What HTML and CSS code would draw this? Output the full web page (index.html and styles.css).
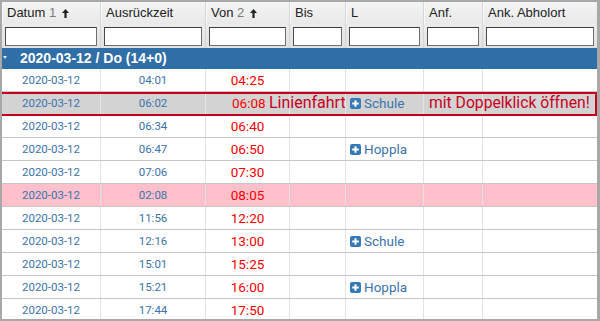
FILE: index.html
```html
<!DOCTYPE html>
<html>
<head>
<meta charset="utf-8">
<link rel="stylesheet" href="styles.css">
</head>
<body>
<div class="frame">
  <div class="cols head">
    <div class="hc">Datum <span class="num">1</span> <svg class="arr" width="7" height="9" viewBox="0 0 7 9"><path d="M3.5 0 L7 4 L4.6 4 L4.6 9 L2.4 9 L2.4 4 L0 4 Z" fill="#222"/></svg></div>
    <div class="hc">Ausrückzeit</div>
    <div class="hc">Von <span class="num">2</span> <svg class="arr" width="7" height="9" viewBox="0 0 7 9"><path d="M3.5 0 L7 4 L4.6 4 L4.6 9 L2.4 9 L2.4 4 L0 4 Z" fill="#222"/></svg></div>
    <div class="hc">Bis</div>
    <div class="hc">L</div>
    <div class="hc">Anf.</div>
    <div class="hc last">Ank. Abholort</div>
  </div>
  <div class="cols filters">
    <div class="fc"><input type="text"></div>
    <div class="fc"><input type="text"></div>
    <div class="fc"><input type="text"></div>
    <div class="fc"><input type="text"></div>
    <div class="fc"><input type="text"></div>
    <div class="fc"><input type="text"></div>
    <div class="fc last"><input type="text"></div>
  </div>
  <div class="group"><span class="tri"></span>2020-03-12 / Do (14+0)</div>

  <div class="cols row">
    <div class="c date">2020-03-12</div><div class="c time">04:01</div><div class="c von">04:25</div><div class="c"></div><div class="c"></div><div class="c"></div><div class="c last"></div>
  </div>
  <div class="cols row sel">
    <div class="c date">2020-03-12</div><div class="c time">06:02</div><div class="c von left">06:08 <span class="note">Linienfahrt</span></div><div class="c"></div><div class="c tag"><svg class="plus" width="11" height="11" viewBox="0 0 11 11"><rect width="11" height="11" rx="2" fill="#337ab7"/><path d="M5.5 2.2V8.8M2.2 5.5H8.8" stroke="#fff" stroke-width="2"/></svg>Schule</div><div class="c"><span class="note hint">mit Doppelklick öffnen!</span></div><div class="c last"></div>
  </div>
  <div class="cols row">
    <div class="c date">2020-03-12</div><div class="c time">06:34</div><div class="c von">06:40</div><div class="c"></div><div class="c"></div><div class="c"></div><div class="c last"></div>
  </div>
  <div class="cols row">
    <div class="c date">2020-03-12</div><div class="c time">06:47</div><div class="c von">06:50</div><div class="c"></div><div class="c tag"><svg class="plus" width="11" height="11" viewBox="0 0 11 11"><rect width="11" height="11" rx="2" fill="#337ab7"/><path d="M5.5 2.2V8.8M2.2 5.5H8.8" stroke="#fff" stroke-width="2"/></svg>Hoppla</div><div class="c"></div><div class="c last"></div>
  </div>
  <div class="cols row">
    <div class="c date">2020-03-12</div><div class="c time">07:06</div><div class="c von">07:30</div><div class="c"></div><div class="c"></div><div class="c"></div><div class="c last"></div>
  </div>
  <div class="cols row pink">
    <div class="c date">2020-03-12</div><div class="c time">02:08</div><div class="c von">08:05</div><div class="c"></div><div class="c"></div><div class="c"></div><div class="c last"></div>
  </div>
  <div class="cols row">
    <div class="c date">2020-03-12</div><div class="c time">11:56</div><div class="c von">12:20</div><div class="c"></div><div class="c"></div><div class="c"></div><div class="c last"></div>
  </div>
  <div class="cols row">
    <div class="c date">2020-03-12</div><div class="c time">12:16</div><div class="c von">13:00</div><div class="c"></div><div class="c tag"><svg class="plus" width="11" height="11" viewBox="0 0 11 11"><rect width="11" height="11" rx="2" fill="#337ab7"/><path d="M5.5 2.2V8.8M2.2 5.5H8.8" stroke="#fff" stroke-width="2"/></svg>Schule</div><div class="c"></div><div class="c last"></div>
  </div>
  <div class="cols row">
    <div class="c date">2020-03-12</div><div class="c time">15:01</div><div class="c von">15:25</div><div class="c"></div><div class="c"></div><div class="c"></div><div class="c last"></div>
  </div>
  <div class="cols row">
    <div class="c date">2020-03-12</div><div class="c time">15:21</div><div class="c von">16:00</div><div class="c"></div><div class="c tag"><svg class="plus" width="11" height="11" viewBox="0 0 11 11"><rect width="11" height="11" rx="2" fill="#337ab7"/><path d="M5.5 2.2V8.8M2.2 5.5H8.8" stroke="#fff" stroke-width="2"/></svg>Hoppla</div><div class="c"></div><div class="c last"></div>
  </div>
  <div class="cols row">
    <div class="c date">2020-03-12</div><div class="c time">17:44</div><div class="c von">17:50</div><div class="c"></div><div class="c"></div><div class="c"></div><div class="c last"></div>
  </div>
</div>
</body>
</html>
```

FILE: styles.css
```css
html, body {
  margin: 0;
  padding: 0;
  background: #fff;
}
.frame {
  width: 600px;
  height: 321px;
  box-sizing: border-box;
  border-style: solid;
  border-color: #a8a8a8;
  border-width: 2px 3px 2px 2px;
  overflow: hidden;
  font-family: Roboto, "Liberation Sans", sans-serif;
}
.cols {
  display: grid;
  grid-template-columns: 99px 105px 84px 56px 78px 59px 114px;
}
.head {
  height: 22px;
  background: linear-gradient(#f4f4f4, #e9e9e9);
  font-family: "Liberation Sans", Arial, sans-serif;
  font-size: 13px;
  color: #222;
}
.hc {
  box-sizing: border-box;
  border-right: 1px solid #d6d6d6;
  box-shadow: inset 1px 0 0 #fafafa;
  padding-left: 5px;
  line-height: 22px;
  white-space: nowrap;
  overflow: hidden;
}
.hc .num {
  color: #7a7a7a;
}
.hc .arr {
  margin-left: 2px;
  vertical-align: -1px;
}
.last {
  border-right: none !important;
}
.filters {
  height: 24px;
  background: linear-gradient(#ececec, #e2e2e2);
}
.fc {
  box-sizing: border-box;
  border-right: 1px solid #d6d6d6;
  padding: 3px 3px 0 3px;
}
.fc input {
  display: block;
  box-sizing: border-box;
  width: 100%;
  height: 19px;
  margin: 0;
  padding: 0;
  border: 1px solid #6e6e6e;
  border-top-color: #3c3c3c;
  border-left-color: #4a4a4a;
  background: #fff;
}
.group {
  height: 21px;
  background: #2f6ea7;
  color: #fff;
  font-family: "Liberation Sans", Arial, sans-serif;
  font-weight: bold;
  font-size: 14px;
  line-height: 21px;
  padding-left: 18px;
  position: relative;
  display: flex;
  align-items: center;
}
.tri {
  position: absolute;
  left: 1px;
  top: 8px;
  width: 0;
  height: 0;
  border-left: 2.5px solid transparent;
  border-right: 2.5px solid transparent;
  border-top: 3px solid #dfe9f3;
}
.row {
  height: 23px;
  box-sizing: border-box;
  border-bottom: 1px solid #c6c6c6;
  background: #fff;
}
.row.sel {
  background: #d3d3d3;
  position: relative;
}
.row.sel::after {
  content: "";
  position: absolute;
  left: -2px;
  right: 0;
  top: 0;
  bottom: -2px;
  border: 2px solid #c8001e;
  pointer-events: none;
}
.row.pink {
  background: #ffc0cb;
}
.c {
  box-sizing: border-box;
  border-right: 1px solid #e3e3e3;
  line-height: 22px;
  white-space: nowrap;
}
.date {
  text-align: center;
  font-size: 11.5px;
  color: #3a74ad;
}
.time {
  text-align: center;
  font-size: 11.5px;
  color: #3a74ad;
}
.von {
  text-align: center;
  font-size: 13.5px;
  color: #f00;
}
.von.left {
  text-align: left;
  padding-left: 26px;
}
.note {
  font-size: 16px;
  color: #c8001e;
}
.hint {
  font-size: 15.7px;
  padding-left: 5px;
  position: relative;
  z-index: 1;
}
.tag {
  padding-left: 4px;
  font-size: 13.5px;
  color: #3a74ad;
  display: flex;
  align-items: center;
  gap: 3px;
}
.plus {
  flex: none;
}
```
